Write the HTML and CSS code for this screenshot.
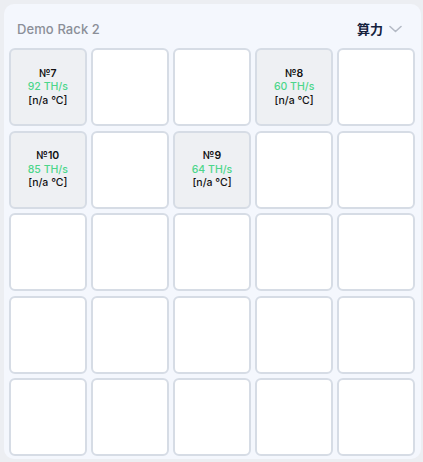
FILE: index.html
```html
<!DOCTYPE html>
<html>
<head>
<meta charset="utf-8">
<link rel="stylesheet" href="styles.css">
</head>
<body>
<div class="card">
  <div class="header">
    <span class="title">Demo Rack 2</span>
    <span class="select">算力
      <svg class="chev" width="13" height="8" viewBox="0 0 13 8"><path d="M1 1.5 L6.5 6.5 L12 1.5" fill="none" stroke="#b4bac5" stroke-width="1.6" stroke-linecap="round" stroke-linejoin="round"/></svg>
    </span>
  </div>
  <div class="grid">
    <div class="cell filled"><div class="num">№7</div><div class="hash">92 TH/s</div><div class="temp">[n/a °C]</div></div>
    <div class="cell"></div>
    <div class="cell"></div>
    <div class="cell filled"><div class="num">№8</div><div class="hash">60 TH/s</div><div class="temp">[n/a °C]</div></div>
    <div class="cell"></div>
    <div class="cell filled"><div class="num">№10</div><div class="hash">85 TH/s</div><div class="temp">[n/a °C]</div></div>
    <div class="cell"></div>
    <div class="cell filled"><div class="num">№9</div><div class="hash">64 TH/s</div><div class="temp">[n/a °C]</div></div>
    <div class="cell"></div>
    <div class="cell"></div>
    <div class="cell"></div>
    <div class="cell"></div>
    <div class="cell"></div>
    <div class="cell"></div>
    <div class="cell"></div>
    <div class="cell"></div>
    <div class="cell"></div>
    <div class="cell"></div>
    <div class="cell"></div>
    <div class="cell"></div>
    <div class="cell"></div>
    <div class="cell"></div>
    <div class="cell"></div>
    <div class="cell"></div>
    <div class="cell"></div>
  </div>
</div>
</body>
</html>
```

FILE: styles.css
```css
html, body {
  margin: 0;
  padding: 0;
  background: #eceef2;
  font-family: Inter, "Noto Sans CJK SC", sans-serif;
}
body {
  padding: 4px 2px 3px 4px;
  width: 423px;
  height: 462px;
  box-sizing: border-box;
}
.card {
  background: #f4f7fd;
  border-radius: 10px;
  height: 455px;
  padding: 0 6px 0 5px;
  box-sizing: border-box;
}
.header {
  height: 44px;
  display: flex;
  align-items: center;
  justify-content: space-between;
  padding: 5px 13px 0 8px;
  box-sizing: border-box;
}
.title {
  font-size: 13px;
  color: #8b8f98;
  font-weight: 500;
  letter-spacing: 0.1px;
}
.select {
  display: flex;
  align-items: center;
  gap: 6px;
  font-size: 13px;
  font-weight: 700;
  color: #14213d;
  font-family: "Noto Sans CJK SC", sans-serif;
}
.chev { margin-top: 1px; }
.grid {
  display: grid;
  grid-template-columns: repeat(5, 1fr);
  grid-auto-rows: 78px;
  gap: 4.5px 4.5px;
}
.cell {
  background: #ffffff;
  border: 2px solid #d6dce5;
  border-radius: 6px;
  box-sizing: border-box;
  display: flex;
  flex-direction: column;
  align-items: center;
  justify-content: center;
  font-size: 10.5px;
  font-weight: 500;
  line-height: 13.5px;
  color: #111;
}
.cell.filled {
  background: #eef0f3;
}
.hash { color: #4cd68a; }
.num { font-weight: 600; }
```
